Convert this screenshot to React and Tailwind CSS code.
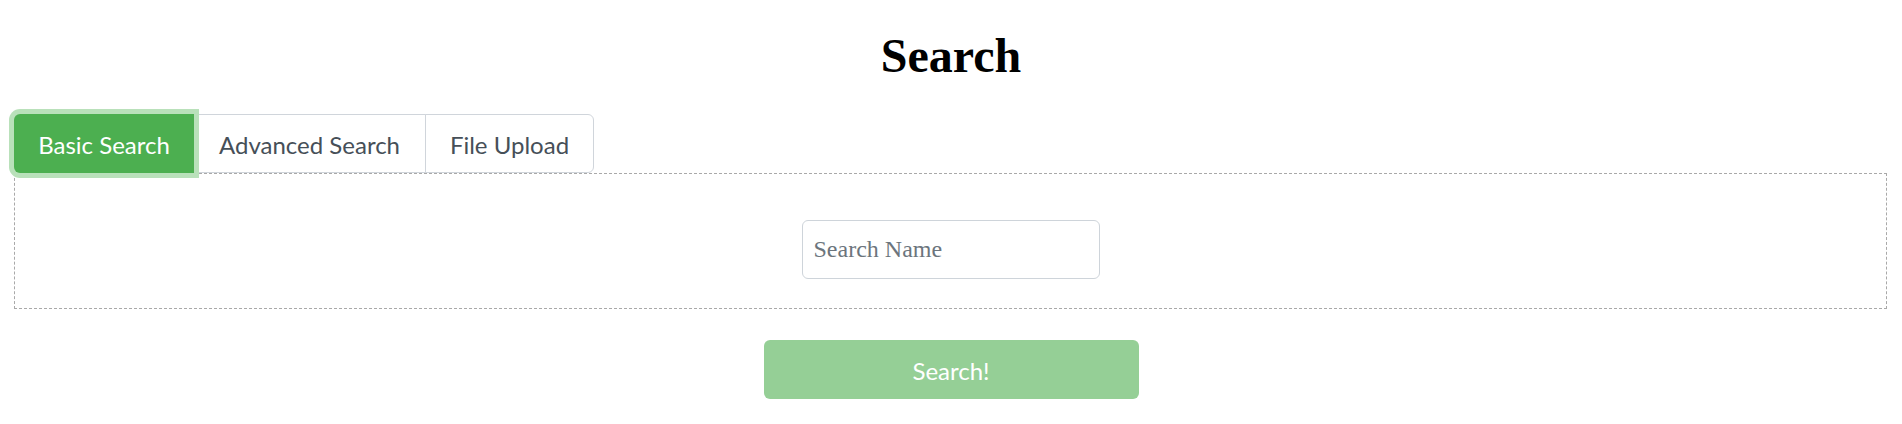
import { useState } from 'react';

const TABS = ['Basic Search', 'Advanced Search', 'File Upload'];

// widths measured from the reference, px
const TAB_WIDTHS = ['w-[180px]', 'w-[233px]', 'w-[169px]'];

export default function App() {
  const [active, setActive] = useState(0);
  const [query, setQuery] = useState('');

  return (
    <div className="min-h-screen bg-white pt-[28px] font-['Lato','Open_Sans',sans-serif]">
      <h1 className="text-center font-['Liberation_Serif',serif] text-[48px] font-bold leading-[55px] text-black">
        Search
      </h1>

      {/* Tabs */}
      <div className="mt-[31px] flex pl-[14px]">
        {TABS.map((tab, i) => {
          const isActive = i === active;
          return (
            <button
              key={tab}
              onClick={() => setActive(i)}
              className={[
                'flex h-[59px] items-center justify-center pt-[3px] text-[24px] leading-none',
                TAB_WIDTHS[i],
                i > 0 ? '-ml-px' : '',
                i === 0 ? 'rounded-l-[6px]' : '',
                i === TABS.length - 1 ? 'rounded-r-[6px]' : '',
                isActive
                  ? 'relative z-10 bg-[#4caf50] text-white shadow-[0_0_0_5px_#b9e1ba]'
                  : 'border border-[#d0d5db] bg-white text-[#464f58]',
              ].join(' ')}
            >
              {tab}
            </button>
          );
        })}
      </div>

      {/* Panel */}
      <div className="ml-[14px] mr-[15px] flex justify-center border border-dashed border-[#a9a9a9] pt-[46px] pb-[29px]">
        <input
          value={query}
          onChange={(e) => setQuery(e.target.value)}
          placeholder="Search Name"
          className="h-[59px] w-[298px] rounded-[6px] border border-[#ced4da] px-[11px] font-['Liberation_Serif',serif] text-[24px] text-[#495057] outline-none placeholder:text-[#6c757d]"
        />
      </div>

      <div className="mt-[31px] flex justify-center">
        <button className="h-[59px] w-[375px] rounded-[6px] bg-[#95cf96] pt-[3px] text-[24px] leading-none text-white">
          Search!
        </button>
      </div>
    </div>
  );
}
